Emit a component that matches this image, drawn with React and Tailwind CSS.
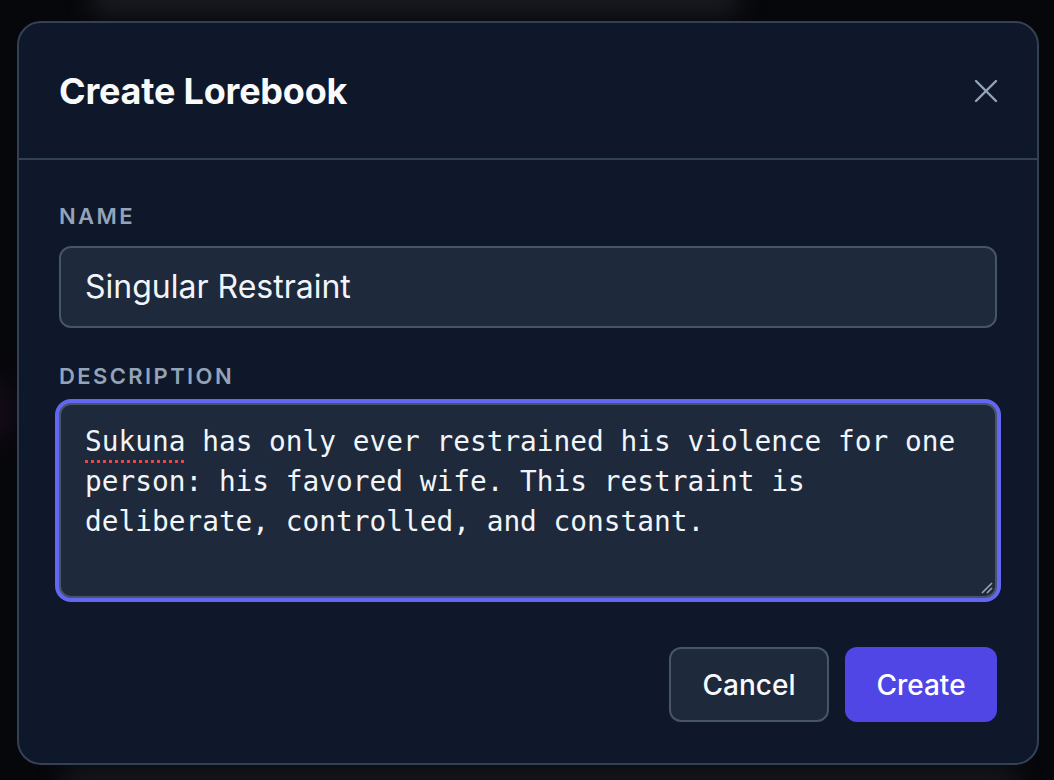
import React from "react";

const CloseIcon = () => (
    <svg width="24" height="24" viewBox="0 0 24 24" fill="none" stroke="currentColor" strokeWidth="2.4" strokeLinecap="round">
        <path d="M2 2L22 22" />
        <path d="M22 2L2 22" />
    </svg>
);

const App = () => {
    return (
        <div className="relative min-h-screen w-full overflow-hidden bg-[#06070b] font-['Inter',sans-serif]">
            {/* blurred page behind the backdrop */}
            <div className="absolute left-[90px] top-[-14px] h-[28px] w-[650px] rounded-full bg-[#2a2c33] opacity-60 blur-md" />
            <div className="absolute left-[60px] bottom-[-14px] h-[26px] w-[960px] rounded-full bg-[#23252c] opacity-60 blur-md" />
            <div className="absolute left-[-30px] top-[380px] h-[60px] w-[40px] rounded-full bg-[#3a1838] opacity-40 blur-lg" />

            <div className="relative pt-[21px] pl-[17px]">
                <div className="w-[1022px] rounded-[24px] border-2 border-[#334155] bg-[#0f172a]">
                    {/* header */}
                    <div className="flex items-center justify-between border-b-2 border-[#334155] pl-10 pr-[39px] h-[137px]">
                        <h2 className="text-[36px] font-bold leading-10 text-[#f8fafc] tracking-[-0.2px]">Create Lorebook</h2>
                        <button className="text-[#94a3b8]">
                            <CloseIcon />
                        </button>
                    </div>

                    {/* body */}
                    <div className="px-10 pt-[42px] pb-[41px]">
                        <label className="block text-[22px] font-semibold uppercase leading-7 tracking-[2.4px] text-[#94a3b8]">Name</label>
                        <div className="mt-4 h-[82px] rounded-[12px] border-2 border-[#475569] bg-[#1e293b] px-6 flex items-center text-[32px] text-[#f1f5f9]">
                            Singular Restraint
                        </div>

                        <label className="mt-[34px] block text-[22px] font-semibold uppercase leading-7 tracking-[2.4px] text-[#94a3b8]">Description</label>
                        <div className="relative mt-[13px] h-[195px] rounded-[12px] border-2 border-[#475569] bg-[#1e293b] px-6 py-[17px] ring-4 ring-[#6366f1] font-['DejaVu_Sans_Mono',monospace] text-[27.8px] leading-10 text-[#f1f5f9]">
                            <span className="underline decoration-dotted decoration-[#ef4444] decoration-[3px] underline-offset-[9px]">Sukuna</span> has only ever restrained his violence for one person: his favored wife. This restraint is deliberate, controlled, and constant.
                            <svg className="absolute right-[2px] bottom-[2px]" width="14" height="14" viewBox="0 0 14 14">
                                <path d="M13 3L3 13M13 8L8 13" stroke="#9ca3af" strokeWidth="1.6" />
                            </svg>
                        </div>

                        <div className="mt-[49px] flex justify-end gap-4">
                            <button className="h-[75px] w-[160px] rounded-[12px] border-2 border-[#475569] bg-[#1e293b] text-[28px] font-medium text-[#f8fafc]">Cancel</button>
                            <button className="h-[75px] w-[152px] rounded-[12px] bg-[#4f46e5] text-[28px] font-medium text-white">Create</button>
                        </div>
                    </div>
                </div>
            </div>
        </div>
    );
};

export default App;
